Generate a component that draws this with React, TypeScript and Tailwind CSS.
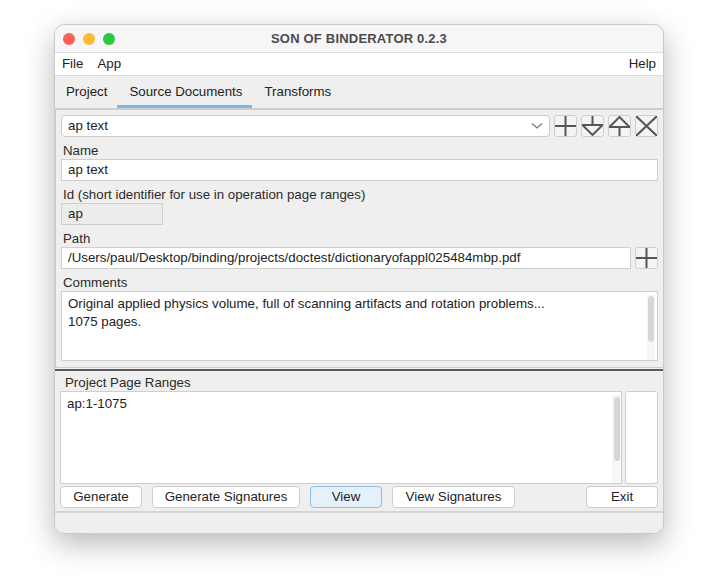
import React from 'react';

const font = { fontFamily: '"Liberation Sans", Arial, sans-serif' };

function IconButton({ kind }: { kind: 'plus' | 'down' | 'up' | 'x' }) {
  return (
    <button className="w-[23px] h-[22px] rounded-[3px] border border-[#cfcfcf] bg-[#f4f4f4] flex items-center justify-center">
      <svg width="21" height="20" viewBox="0 0 21 20" fill="none" stroke="#555" strokeWidth="2">
        {kind === 'plus' && (
          <>
            <path d="M10.5 0 V20" />
            <path d="M0 10 H21" />
          </>
        )}
        {kind === 'down' && (
          <>
            <path d="M10.5 0 V9" />
            <path d="M0.5 9 H20.5 L10.5 19 Z" />
          </>
        )}
        {kind === 'up' && (
          <>
            <path d="M10.5 11 V20" />
            <path d="M0.5 11 H20.5 L10.5 1 Z" />
          </>
        )}
        {kind === 'x' && (
          <>
            <path d="M0 0 L21 20" />
            <path d="M21 0 L0 20" />
          </>
        )}
      </svg>
    </button>
  );
}

function Label({ children }: { children: React.ReactNode }) {
  return <div className="h-[22px] pt-[6px] text-[13.3px] leading-[15px] text-[#2b2b2b] pl-[2px]">{children}</div>;
}

function Btn({ children, w, active }: { children: React.ReactNode; w: string; active?: boolean }) {
  return (
    <button
      className={`${w} h-[22px] rounded-[4px] border text-[13.3px] text-[#222] flex items-center justify-center ${
        active ? 'bg-[#e4f0fa] border-[#8fbde3]' : 'bg-white border-[#cdcdcd]'
      }`}
    >
      {children}
    </button>
  );
}

export default function App() {
  return (
    <div className="w-[722px] h-[580px] bg-white pt-[24px] pl-[54px]" style={font}>
      <div className="w-[610px] h-[510px] rounded-[10px] bg-[#efefef] border border-[#c9c9c9] shadow-[0_10px_30px_rgba(0,0,0,0.28)] overflow-hidden flex flex-col">
        {/* title bar */}
        <div className="h-[27px] bg-[#f6f6f8] flex items-center relative">
          <div className="flex gap-[8px] pl-[8px]">
            <span className="w-[12px] h-[12px] rounded-full bg-[#fe5f57]" />
            <span className="w-[12px] h-[12px] rounded-full bg-[#febc2e]" />
            <span className="w-[12px] h-[12px] rounded-full bg-[#28c840]" />
          </div>
          <div className="flex-1 text-center pr-[60px] text-[13px] font-bold text-[#4b4b4b] tracking-[0.2px]">SON OF BINDERATOR 0.2.3</div>
        </div>
        {/* menu */}
        <div className="h-[24px] bg-white border-t border-b border-[#dcdcdc] flex items-center px-[7px] text-[13.3px] text-[#1e1e1e]">
          <span>File</span>
          <span className="ml-[14px]">App</span>
          <span className="ml-auto">Help</span>
        </div>
        {/* tabs */}
        <div className="h-[32px] flex items-end pl-[3px] text-[13.3px] text-[#222]">
          <div className="pl-[8px] pr-[10px] h-[32px] flex items-center">Project</div>
          <div className="pl-[12px] pr-[10px] h-[32px] flex items-center border-b-[3px] border-[#7fb7e2] pt-[3px]">Source Documents</div>
          <div className="pl-[12px] h-[32px] flex items-center">Transforms</div>
        </div>
        {/* panel */}
        <div className="h-[260px] border-t-2 border-l border-b border-[#cdcdcd] mx-0 px-[5px] pt-[5px] flex flex-col">
          <div className="flex items-center gap-[4px]">
            <div className="w-[490px] h-[22px] bg-white border border-[#c9c9c9] rounded-[4px] flex items-center px-[6px] text-[13.3px] text-[#222]">
              <span className="flex-1">ap text</span>
              <svg width="12" height="8" viewBox="0 0 12 8" fill="none" stroke="#777" strokeWidth="1.2">
                <path d="M1 1.5 L6 6 L11 1.5" />
              </svg>
            </div>
            <IconButton kind="plus" />
            <IconButton kind="down" />
            <IconButton kind="up" />
            <IconButton kind="x" />
          </div>
          <Label>Name</Label>
          <div className="w-[597px] h-[22px] bg-white border border-[#cfcfcf] px-[6px] flex items-center text-[13.3px] text-[#222]">ap text</div>
          <Label>Id (short identifier for use in operation page ranges)</Label>
          <div className="w-[102px] h-[22px] bg-[#ececec] border border-[#cfcfcf] px-[6px] flex items-center text-[13.3px] text-[#222]">ap</div>
          <Label>Path</Label>
          <div className="flex items-center gap-[4px]">
            <div className="w-[571px] h-[22px] bg-white border border-[#cfcfcf] px-[6px] flex items-center text-[13.3px] text-[#222]">
              /Users/paul/Desktop/binding/projects/doctest/dictionaryofappl025484mbp.pdf
            </div>
            <IconButton kind="plus" />
          </div>
          <Label>Comments</Label>
          <div className="w-[597px] h-[70px] bg-white border border-[#cfcfcf] pl-[6px] pr-[2px] pt-[3px] flex text-[13.3px] leading-[18px] text-[#222]">
            <div className="flex-1">
              Original applied physics volume, full of scanning artifacts and rotation problems...
              <br />
              1075 pages.
            </div>
            <div className="w-[8px] h-full bg-[#f7f7f7] pt-[1px] pb-[2px] flex flex-col">
              <div className="w-[6px] mx-auto h-[46px] rounded-full bg-[#d6d6d6]" />
            </div>
          </div>
        </div>
        {/* split divider */}
        <div className="h-[2px] mt-[1px] bg-[#5a5a5a]" />
        {/* lower */}
        <div className="px-[5px] flex flex-col">
          <div className="h-[20px] pt-[4px] text-[13.3px] leading-[15px] text-[#2b2b2b] pl-[5px]">Project Page Ranges</div>
          <div className="flex gap-[3px]">
            <div className="w-[563px] h-[93px] bg-white border border-[#cfcfcf] pl-[6px] pt-[3px] flex text-[13.3px] leading-[18px] text-[#222]">
              <div className="flex-1">ap:1-1075</div>
              <div className="w-[9px] h-full bg-[#f7f7f7] pt-[2px] flex flex-col">
                <div className="w-[6px] mx-auto h-[64px] rounded-full bg-[#d6d6d6]" />
              </div>
            </div>
            <div className="w-[33px] h-[93px] bg-white border border-[#cfcfcf] rounded-[3px]" />
          </div>
          <div className="flex items-center mt-[2px] h-[22px]">
            <Btn w="w-[82px]">Generate</Btn>
            <div className="ml-[10px]">
              <Btn w="w-[148px]">Generate Signatures</Btn>
            </div>
            <div className="ml-[10px]">
              <Btn w="w-[72px]" active>View</Btn>
            </div>
            <div className="ml-[10px]">
              <Btn w="w-[123px]">View Signatures</Btn>
            </div>
            <div className="ml-auto">
              <Btn w="w-[72px]">Exit</Btn>
            </div>
          </div>
        </div>
        <div className="mt-[3px] flex-1 border-t-2 border-[#d4d4d4] bg-[#efefef]" />
      </div>
    </div>
  );
}
